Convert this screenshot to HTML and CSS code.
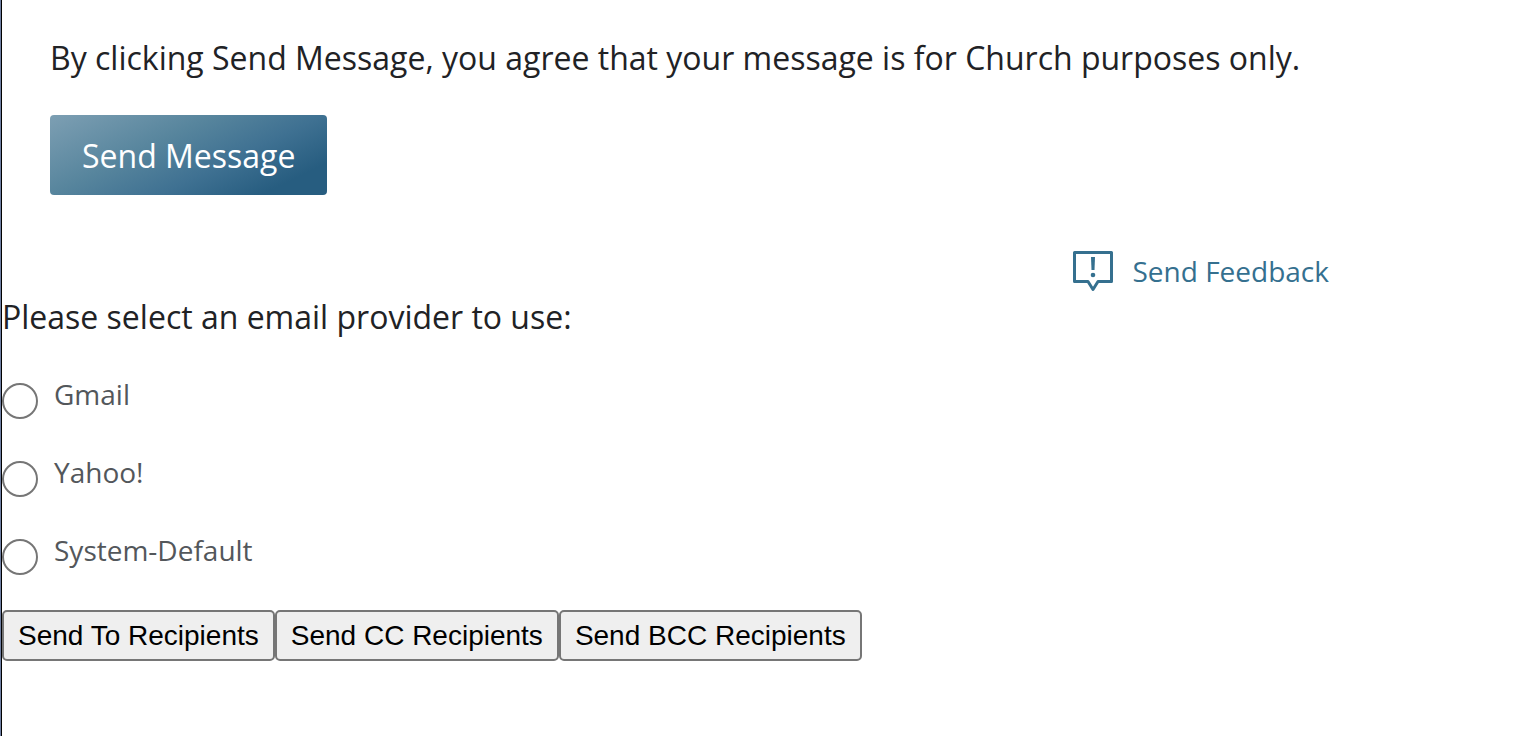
FILE: index.html
```html
<!DOCTYPE html>
<html lang="en">
<head>
<meta charset="utf-8">
<title>Send Message</title>
<link rel="stylesheet" href="styles.css">
</head>
<body>
<main class="page">
  <section class="message">
    <p class="notice">By clicking Send Message, you agree that your message is for Church purposes only.</p>
    <button class="send" type="button">Send Message</button>
  </section>
  <div class="feedback-row">
    <a class="feedback" href="#">
      <svg class="feedback-icon" viewBox="0 0 40 42" aria-hidden="true">
        <path d="M1.500 2.500h37v29H25l-5 8-5-8H1.500z" fill="none" stroke="currentColor" stroke-width="3" stroke-linejoin="round"/>
        <path d="M18 7h4l-.5 13h-3z" fill="currentColor"/>
        <circle cx="20" cy="25" r="2.300" fill="currentColor"/>
      </svg>
      <span>Send Feedback</span>
    </a>
  </div>
  <form class="providers">
    <p class="prompt">Please select an email provider to use:</p>
    <label class="option"><input class="radio" type="radio" name="provider"><span>Gmail</span></label>
    <label class="option"><input class="radio" type="radio" name="provider"><span>Yahoo!</span></label>
    <label class="option"><input class="radio" type="radio" name="provider"><span>System-Default</span></label>
    <div class="actions">
      <button class="action" type="button">Send To Recipients</button>
      <button class="action" type="button">Send CC Recipients</button>
      <button class="action" type="button">Send BCC Recipients</button>
    </div>
  </form>
</main>
</body>
</html>
```
FILE: styles.css
```css
* { box-sizing: border-box; }
body {
  margin: 0;
  border-left: 1px solid #6f7fa3;
  background: #fff;
  color: #212225;
  font-family: "Open Sans", "Noto Sans", sans-serif;
}
p { margin: 0; }
.page {
  min-height: 100vh;
  border-left: 1px solid #000;
}
.message { padding: 34px 48px 0; }
.notice { font-size: 32px; line-height: 48px; }
.send {
  display: block;
  height: 80px;
  margin-top: 33px;
  padding: 0 32px;
  border: 0;
  border-radius: 4px;
  background: linear-gradient(154deg, #7d9fb3 0%, #57859d 37%, #3f7192 62%, #275d80 85%);
  color: #fff;
  font: 32px "Open Sans", "Noto Sans", sans-serif;
}
.feedback-row {
  display: flex;
  justify-content: flex-end;
  padding: 52px 195px 0 0;
}
.feedback {
  display: flex;
  align-items: center;
  gap: 20px;
  color: #35708f;
  font-size: 28px;
  line-height: 48px;
  text-decoration: none;
}
.feedback-icon { width: 40px; height: 42px; }
.prompt { font-size: 32px; line-height: 44px; }
.option {
  display: flex;
  gap: 16px;
  width: max-content;
  margin-top: 36px;
  color: #53575b;
  font-size: 28px;
  line-height: 38px;
}
.option + .option { margin-top: 34px; }
.radio {
  appearance: none;
  width: 36px;
  height: 36px;
  margin: 8px 0 0;
  border: 2px solid #767676;
  border-radius: 50%;
  background: #fff;
}
.actions { display: flex; margin-top: 35px; }
.action {
  height: 51px;
  padding: 0 14px;
  border: 2px solid #767676;
  border-radius: 5px;
  background: #efefef;
  color: #000;
  font: 28px "Liberation Sans", Arial, sans-serif;
}
```
